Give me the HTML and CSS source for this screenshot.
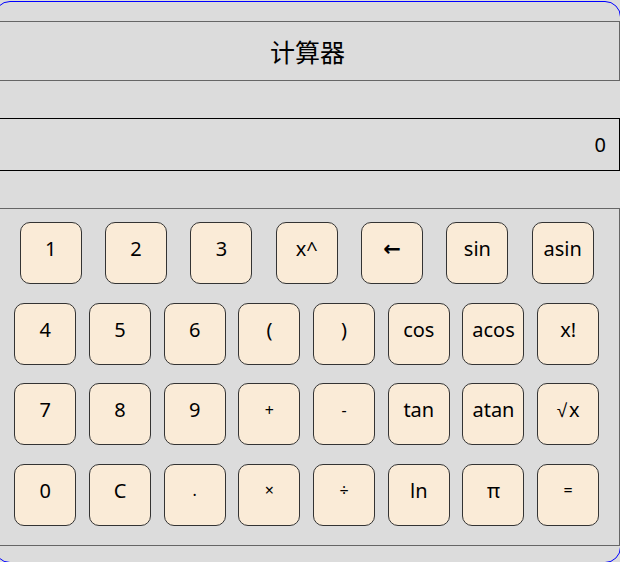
FILE: index.html
```html
<!DOCTYPE html>
<html lang="zh">
<head>
    <meta charset="UTF-8">
    <meta name="viewport" content="width=device-width, initial-scale=1.0">
    <title>计算器</title>
    <link rel="stylesheet" href="styles.css">
</head>
<body>
    <div class="calc">
        <div class="title">计算器</div>
        <div class="screen" id="screen">0</div>

        <!-- 按键 -->
        <div class="keys">
            <div class="row">
                <button>1</button>
                <button>2</button>
                <button>3</button>
                <button>x^</button>
                <button class="back">&#8592;</button>
                <button>sin</button>
                <button>asin</button>
            </div>
            <div class="row">
                <button>4</button>
                <button>5</button>
                <button>6</button>
                <button>(</button>
                <button>)</button>
                <button>cos</button>
                <button>acos</button>
                <button>x!</button>
            </div>
            <div class="row">
                <button>7</button>
                <button>8</button>
                <button>9</button>
                <button class="op">+</button>
                <button class="op">-</button>
                <button>tan</button>
                <button>atan</button>
                <button><span class="root">&#8730;</span>x</button>
            </div>
            <div class="row">
                <button>0</button>
                <button>C</button>
                <button class="op">.</button>
                <button class="op">&times;</button>
                <button class="op">&divide;</button>
                <button>ln</button>
                <button>&pi;</button>
                <button class="op">=</button>
            </div>
        </div>
    </div>
</body>
</html>
```

FILE: styles.css
```css
html, body {
    margin: 0;
    height: 100%;
    overflow: hidden;
    background-color: #dcdcdc;
}
.calc {
    box-sizing: border-box;
    width: 627px;
    height: 562px;
    margin: 1px 0 0 -6px;
    border: 1px solid blue;
    border-radius: 16px;
    background-color: #dcdcdc;
    font-family: "Noto Sans", "Noto Sans CJK SC", sans-serif;
    color: #000;
}
.title {
    box-sizing: border-box;
    height: 60px;
    margin-top: 19px;
    border: 1px solid #666;
    display: flex;
    align-items: center;
    justify-content: center;
    font-family: "Noto Sans CJK SC", sans-serif;
    font-size: 25px;
}
.screen {
    box-sizing: border-box;
    height: 53px;
    margin-top: 37px;
    padding: 0 13px;
    border: 1px solid #000;
    display: flex;
    align-items: center;
    justify-content: flex-end;
    font-size: 20px;
}
.keys {
    box-sizing: border-box;
    height: 338px;
    margin-top: 37px;
    padding: 13px 13.5px 0 12px;
    border: 1px solid #666;
    display: flex;
    flex-direction: column;
    gap: 18.67px;
}
.row {
    display: flex;
    justify-content: space-around;
}
button {
    box-sizing: border-box;
    width: 62px;
    height: 62px;
    padding: 0 0 9px;
    border: 1px solid #333;
    border-radius: 10px;
    background-color: #faebd7;
    color: #000;
    font-family: inherit;
    font-size: 20px;
}
.op {
    font-size: 16px;
}
.back {
    font-family: "DejaVu Sans", sans-serif;
    font-size: 21px;
    font-weight: bold;
}
.root {
    margin-right: 2px;
    font-family: "Liberation Sans", sans-serif;
    font-size: 19px;
}
```
